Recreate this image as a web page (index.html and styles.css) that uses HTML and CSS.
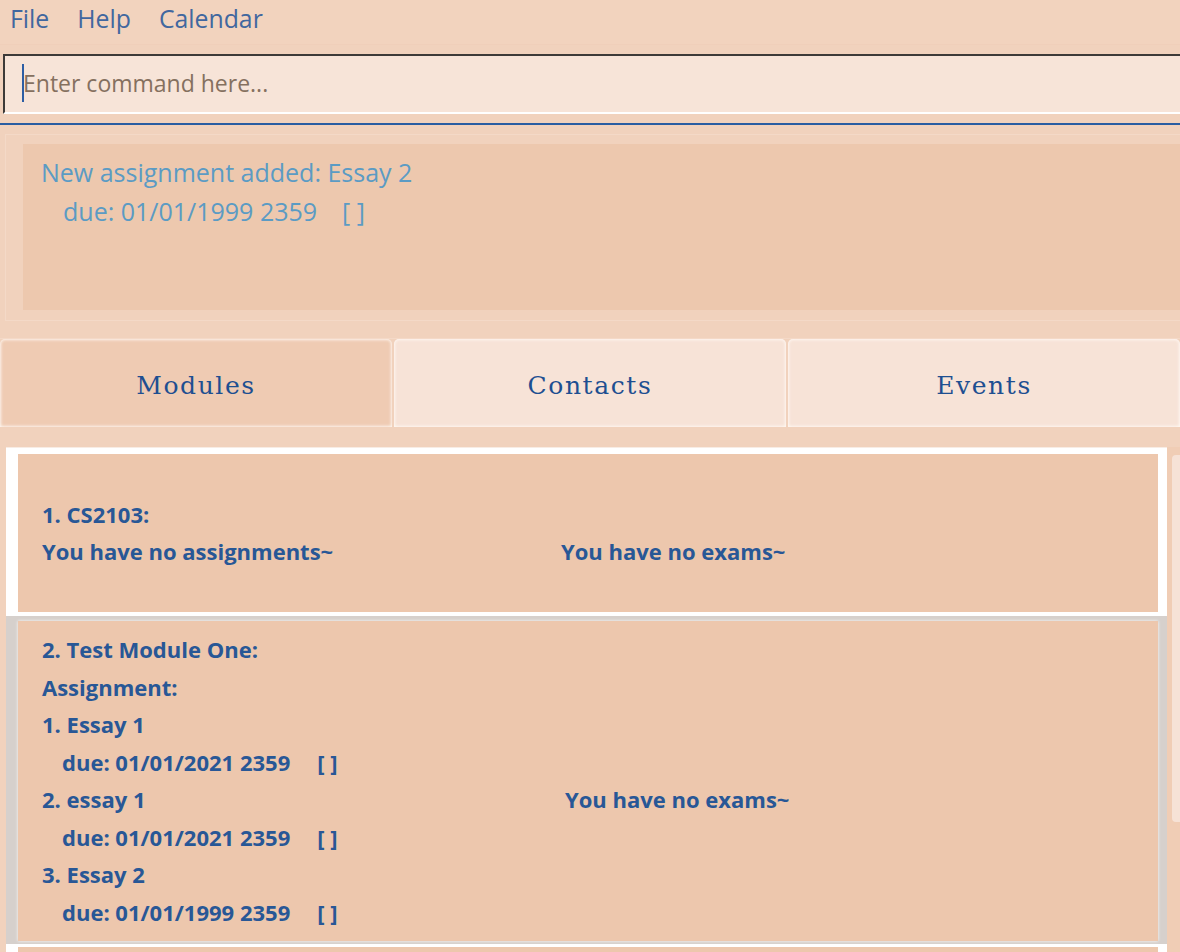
FILE: index.html
```html
<!DOCTYPE html>
<html lang="en">
<head>
<meta charset="utf-8">
<title>Module Tracker</title>
<link rel="stylesheet" href="styles.css">
</head>
<body>
<div class="app">
  <nav class="menubar">
    <span class="menu-item">File</span>
    <span class="menu-item">Help</span>
    <span class="menu-item">Calendar</span>
  </nav>
  <div class="command">
    <span class="caret"></span>
    <span class="placeholder">Enter command here...</span>
  </div>
  <div class="divider"></div>
  <div class="result-frame">
    <div class="result">
      <div>New assignment added: Essay 2</div>
      <div class="indent">due: 01/01/1999 2359<span class="check">[ ]</span></div>
    </div>
  </div>
  <div class="tabs">
    <div class="tab tab-active">Modules</div>
    <div class="tab">Contacts</div>
    <div class="tab">Events</div>
  </div>
  <div class="content">
    <div class="list">
      <div class="cell">
        <div class="card">
          <div class="line">1. CS2103:</div>
          <div class="row">
            <div class="col-left"><div class="line">You have no assignments~</div></div>
            <div class="col-right"><div class="line">You have no exams~</div></div>
          </div>
        </div>
      </div>
      <div class="cell cell-selected">
        <div class="card">
          <div class="line">2. Test Module One:</div>
          <div class="row">
            <div class="col-left col-wide">
              <div class="line">Assignment:</div>
              <div class="line">1. Essay 1</div>
              <div class="line indent-sm">due: 01/01/2021 2359<span class="check-sm">[ ]</span></div>
              <div class="line">2. essay 1</div>
              <div class="line indent-sm">due: 01/01/2021 2359<span class="check-sm">[ ]</span></div>
              <div class="line">3. Essay 2</div>
              <div class="line indent-sm">due: 01/01/1999 2359<span class="check-sm">[ ]</span></div>
            </div>
            <div class="col-right"><div class="line">You have no exams~</div></div>
          </div>
        </div>
      </div>
      <div class="cell">
        <div class="card"></div>
      </div>
    </div>
    <div class="scrollbar"><div class="thumb"></div></div>
  </div>
</div>
</body>
</html>
```
FILE: styles.css
```css
html, body {
  margin: 0;
  padding: 0;
}
body {
  background: #f1d2bd;
  font-family: "Open Sans", "Noto Sans", sans-serif;
  width: 1180px;
  height: 952px;
  overflow: hidden;
}
.app {
  display: flex;
  flex-direction: column;
  height: 952px;
}
.menubar {
  height: 45px;
  display: flex;
  align-items: center;
  padding-left: 10px;
  gap: 28px;
  background: #f2d3be;
  border-bottom: 1px solid #f0cfba;
  box-sizing: border-box;
}
.menu-item {
  font-size: 24.8px;
  color: #41679f;
  line-height: 38px;
  margin-top: -8px;
}
.command {
  margin: 9px 0 0 3px;
  height: 60px;
  box-sizing: border-box;
  background: #f7e4d8;
  border-top: 2px solid #3d3a38;
  border-left: 2px solid #3d3a38;
  border-bottom: 2px solid #ffffff;
  display: flex;
  align-items: center;
  padding-left: 17px;
}
.caret {
  width: 2px;
  height: 38px;
  background: #2d5ea4;
  margin-top: -2px;
}
.placeholder {
  font-size: 23px;
  color: #85705f;
  margin-left: -1px;
  margin-top: -2px;
}
.divider {
  height: 2px;
  background: #2a5da2;
  margin-top: 9px;
}
.result-frame {
  margin: 9px 0 0 5px;
  border: 1px solid #f4d9c7;
  border-right: none;
  padding: 9px 0 10px 17px;
}
.result {
  height: 166px;
  box-sizing: border-box;
  background: #edc8ae;
  padding: 9px 18px 10px;
  font-size: 25px;
  line-height: 39px;
  color: #5b9bc4;
}
.indent {
  padding-left: 22px;
}
.check {
  margin-left: 25px;
}
.tabs {
  margin-top: 17px;
  border-top: 1px solid #f4d9c7;
  display: flex;
  gap: 2px;
  height: 88px;
}
.tab {
  flex: 1;
  display: flex;
  align-items: center;
  justify-content: center;
  background: #f7e3d7;
  border-radius: 5px 5px 0 0;
  box-shadow: inset 0 0 3px 1px rgba(255, 250, 245, 0.9);
  font-family: "DejaVu Serif", serif;
  font-size: 25px;
  letter-spacing: 1.6px;
  color: #1e4f91;
  padding-top: 5px;
  box-sizing: border-box;
}
.tab-active {
  background: #efcbb3;
}
.content {
  margin-top: 20px;
  flex: 1;
  display: flex;
  min-height: 0;
}
.list {
  margin-left: 6px;
  flex: 1;
  background: #ffffff;
  display: flex;
  flex-direction: column;
  overflow: hidden;
  border-top: 1px solid #f8ece4;
}
.cell {
  padding: 6px 9px 4px 12px;
}
.cell-selected {
  background: #d6d0cc;
  padding: 5px 9px 3px 11px;
}
.cell-selected + .cell {
  padding-top: 3px;
}
.cell-selected .card {
  margin-left: 1px;
}
.card {
  min-height: 158px;
  box-sizing: border-box;
  background: #edc7ad;
  box-shadow: 0 0 3px rgba(255, 255, 255, 0.9);
  padding: 10px 24px;
  display: flex;
  flex-direction: column;
  justify-content: center;
  color: #285796;
  font-weight: 700;
  font-size: 22px;
}
.line {
  line-height: 37.5px;
  white-space: nowrap;
}
.row {
  display: flex;
  align-items: center;
}
.col-left {
  width: 519px;
}
.col-wide {
  width: 523px;
}
.indent-sm {
  padding-left: 20px;
}
.check-sm {
  margin-left: 27px;
}
.scrollbar {
  width: 13px;
  background: #f0cdb5;
  padding-top: 8px;
  box-sizing: border-box;
}
.thumb {
  margin-left: 5px;
  width: 12px;
  height: 367px;
  background: #f6e2d6;
  border-radius: 4px;
}
```
